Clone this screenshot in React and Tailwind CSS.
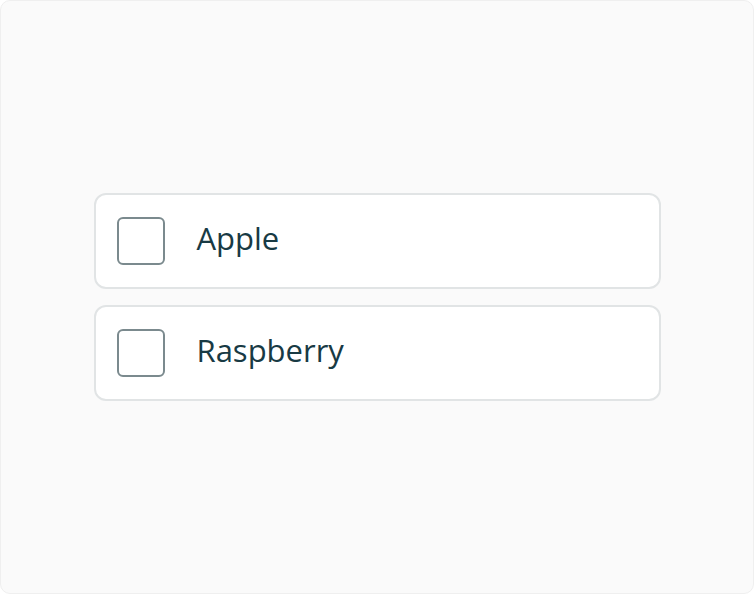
import React from "react";

function Item({ label }) {
  return (
    <label className="flex items-center gap-8 h-[96px] pl-[21px] pr-5 bg-white border-2 border-[#e1e4e5] rounded-xl cursor-pointer">
      <span className="w-12 h-12 shrink-0 rounded-md border-2 border-[#7b8a8e] bg-white" />
      <span className="text-[31px] font-medium leading-none text-[#183a44] -mt-[5px]">{label}</span>
    </label>
  );
}

export default function App() {
  return (
    <div
      className="w-[754px] h-[594px] bg-white"
      style={{ fontFamily: '"Open Sans", "Noto Sans", sans-serif' }}
    >
      <div className="w-full h-full bg-[#fafafa] border border-[#efefef] rounded-[10px] flex items-center justify-center">
        <div className="w-[567px] flex flex-col gap-[16px]">
          <Item label="Apple" />
          <Item label="Raspberry" />
        </div>
      </div>
    </div>
  );
}
